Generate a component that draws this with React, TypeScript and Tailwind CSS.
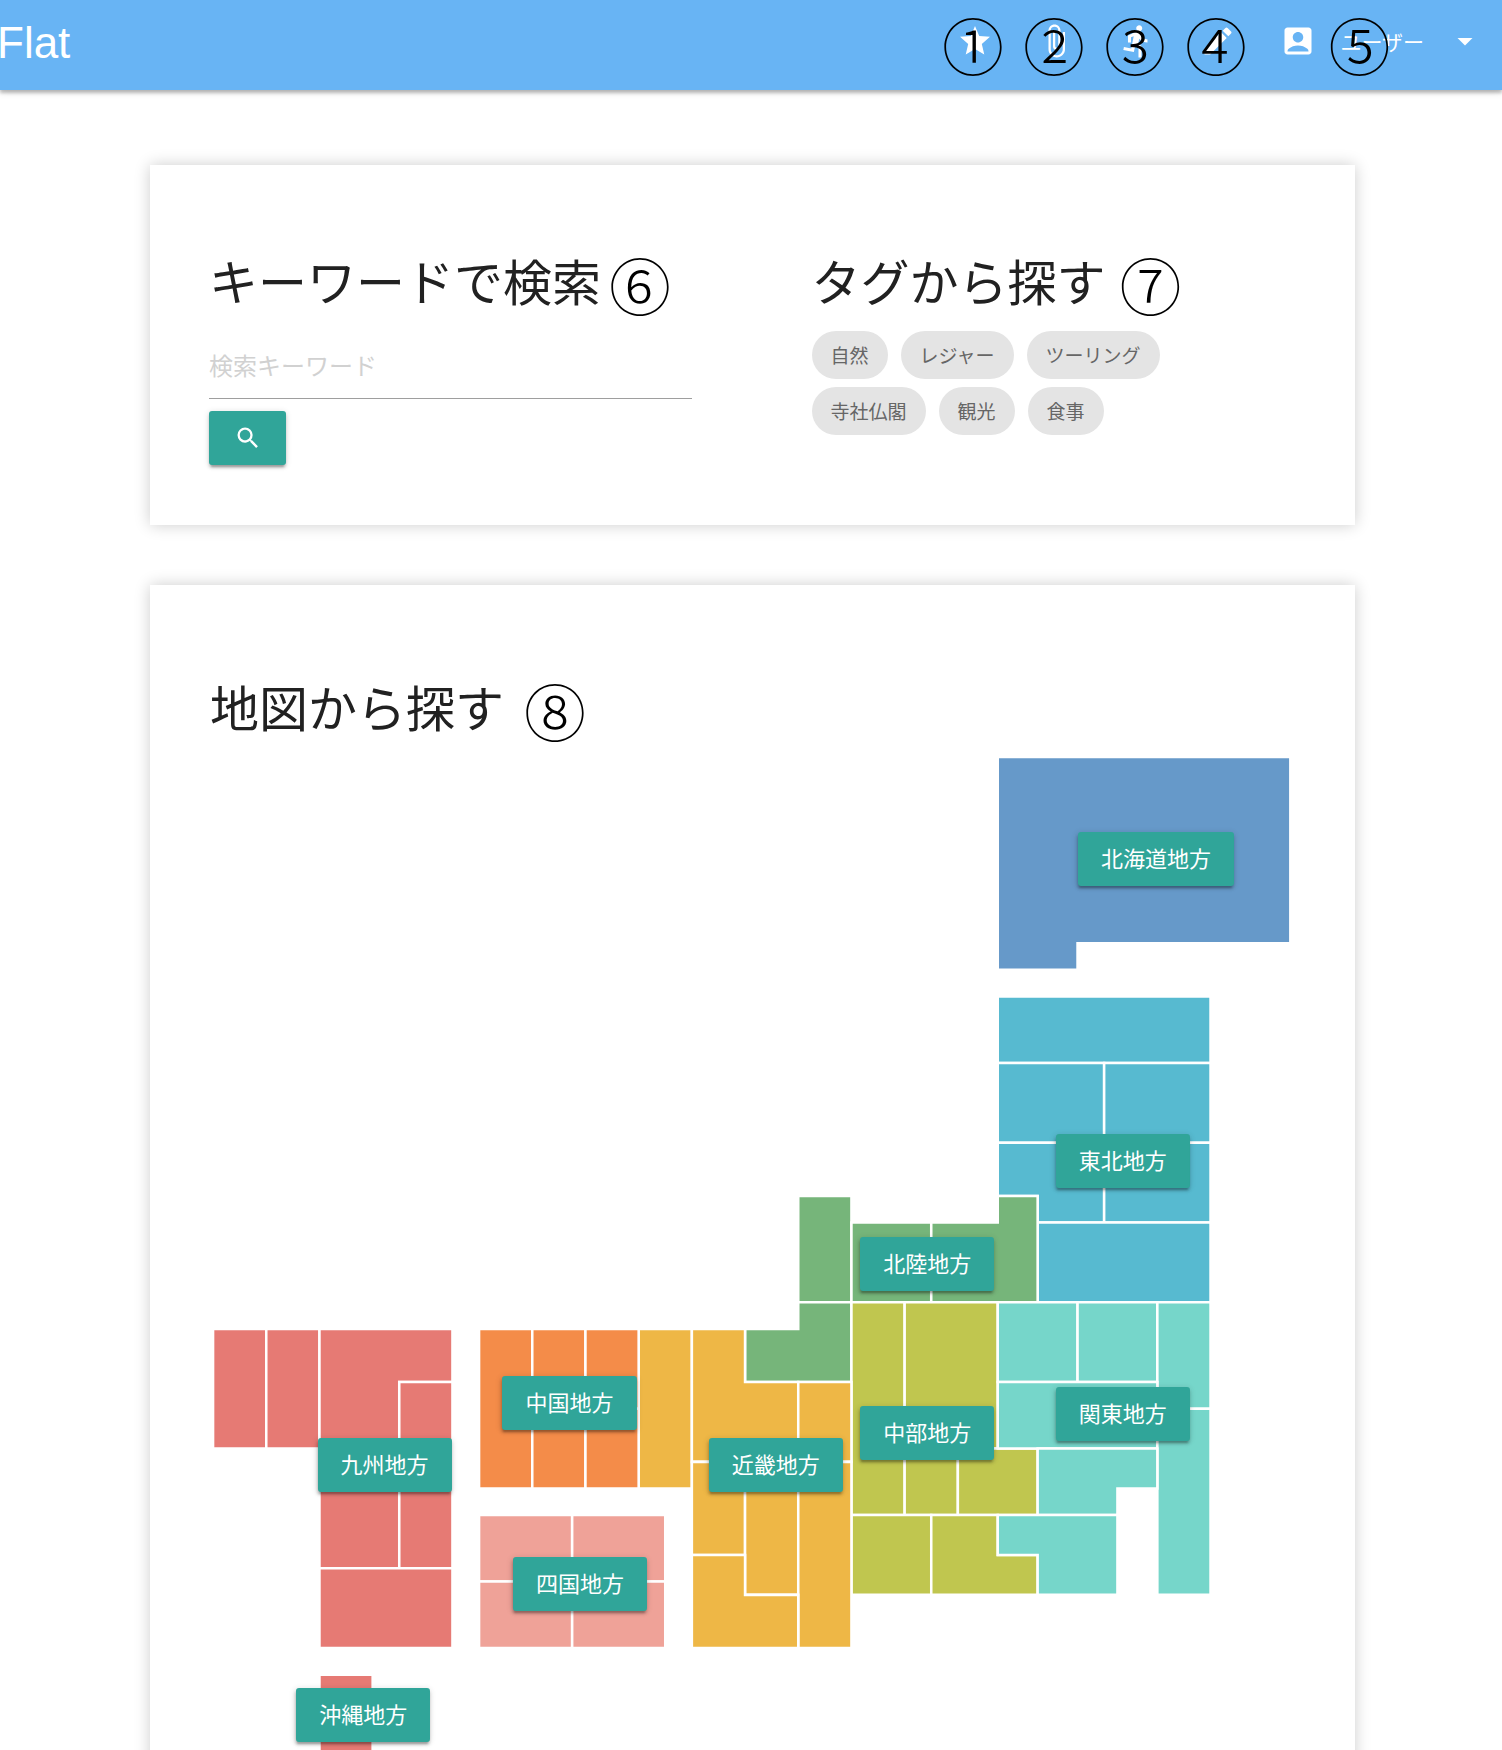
import { MdAccountBox, MdArrowDropDown, MdAttachFile, MdDirectionsRun, MdEdit, MdSearch, MdStar } from "react-icons/md";
import type { ReactNode } from "react";

const tags = ["自然", "レジャー", "ツーリング", "寺社仏閣", "観光", "食事"];

/* The map is drawn on a grid of square units; every polygon is one prefecture. */
const GRID_LEFT = -0.23;
const GRID_WIDTH = 81.58;
const GRID_HEIGHT = 76;

type Region = { name: string; color: string; x: number; y: number; shapes: string[] };

const regions: Region[] = [
  {
    name: "北海道地方", color: "#6699c9", x: 70.9, y: 7.7,
    shapes: ["59,0 81,0 81,14 65,14 65,16 59,16"],
  },
  {
    name: "東北地方", color: "#57bad0", x: 68.4, y: 30.4,
    shapes: [
      "59,18 75,18 75,23 59,23",
      "59,23 67,23 67,29 59,29",
      "67,23 75,23 75,29 67,29",
      "59,29 67,29 67,35 62,35 62,33 59,33",
      "67,29 75,29 75,35 67,35",
      "62,35 75,35 75,41 62,41",
    ],
  },
  {
    name: "北陸地方", color: "#76b57a", x: 53.7, y: 38.1,
    shapes: [
      "44,33 48,33 48,41 44,41",
      "48,35 54,35 54,41 48,41",
      "54,35 59,35 59,33 62,33 62,41 54,41",
      "44,41 48,41 48,47 40,47 40,43 44,43",
    ],
  },
  {
    name: "中部地方", color: "#c0c64f", x: 53.7, y: 50.8,
    shapes: [
      "48,41 52,41 52,57 48,57",
      "52,41 59,41 59,52 52,52",
      "52,52 56,52 56,57 52,57",
      "56,52 62,52 62,57 56,57",
      "48,57 54,57 54,63 48,63",
      "54,57 59,57 59,60 62,60 62,63 54,63",
    ],
  },
  {
    name: "関東地方", color: "#76d6ca", x: 68.4, y: 49.4,
    shapes: [
      "59,41 65,41 65,47 59,47",
      "65,41 71,41 71,47 65,47",
      "71,41 75,41 75,49 71,49",
      "59,47 71,47 71,52 59,52",
      "71,49 75,49 75,63 71,63",
      "62,52 71,52 71,55 68,55 68,57 62,57",
      "59,57 68,57 68,63 62,63 62,60 59,60",
    ],
  },
  {
    name: "近畿地方", color: "#eeb746", x: 42.3, y: 53.2,
    shapes: [
      "32,43 36,43 36,55 32,55",
      "36,43 40,43 40,47 44,47 44,53 36,53",
      "44,47 48,47 48,53 44,53",
      "36,53 40,53 40,60 36,60",
      "40,53 44,53 44,63 40,63",
      "44,53 48,53 48,67 44,67",
      "36,60 40,60 40,63 44,63 44,67 36,67",
    ],
  },
  {
    name: "中国地方", color: "#f48c49", x: 26.8, y: 48.6,
    shapes: [
      "20,43 24,43 24,55 20,55",
      "24,43 28,43 28,49 24,49",
      "24,49 28,49 28,55 24,55",
      "28,43 32,43 32,49 28,49",
      "28,49 32,49 32,55 28,55",
    ],
  },
  {
    name: "四国地方", color: "#efa298", x: 27.6, y: 62.2,
    shapes: [
      "20,57 27,57 27,62 20,62",
      "27,57 34,57 34,62 27,62",
      "20,62 27,62 27,67 20,67",
      "27,62 34,62 34,67 27,67",
    ],
  },
  {
    name: "九州地方", color: "#e67a74", x: 12.9, y: 53.2,
    shapes: [
      "0,43 4,43 4,52 0,52",
      "4,43 8,43 8,52 4,52",
      "8,43 18,43 18,47 14,47 14,53 8,53",
      "14,47 18,47 18,53 14,53",
      "8,53 14,53 14,61 8,61",
      "14,53 18,53 18,61 14,61",
      "8,61 18,61 18,67 8,67",
    ],
  },
  {
    name: "沖縄地方", color: "#e67a74", x: 11.3, y: 72,
    shapes: ["8,69 12,69 12,75 8,75"],
  },
];

const raised = "shadow-[0_3px_3px_rgba(0,0,0,0.16),0_1px_6px_rgba(0,0,0,0.14),0_4px_2px_-2px_rgba(0,0,0,0.2)]";

function Marker({ children }: { children: ReactNode }) {
  return (
    <span className="block text-[62px] leading-[62px] font-light text-black">{children}</span>
  );
}

function NavItem({ label, mark, children }: { label: string; mark: string; children: ReactNode }) {
  return (
    <li className="relative flex w-[81px] justify-center">
      <a href="#" aria-label={label}>{children}</a>
      <span className="pointer-events-none absolute inset-0 flex items-center justify-center pt-1.5 pr-1">
        <Marker>{mark}</Marker>
      </span>
    </li>
  );
}

function Card({ children }: { children: ReactNode }) {
  return <section className="bg-white shadow-[0_0_15px_rgba(0,0,0,0.2)]">{children}</section>;
}

function Heading({ text, mark, gap }: { text: string; mark: string; gap: string }) {
  return (
    <div className={`mb-4 flex items-center ${gap}`}>
      <h2 className="text-[49px] leading-[54px] text-[#212121]">{text}</h2>
      <span className="pt-2"><Marker>{mark}</Marker></span>
    </div>
  );
}

export default function App() {
  return (
    <div className="min-h-screen bg-white font-['Noto_Sans_CJK_JP',sans-serif] text-[#212121]">
      <header className="flex h-[90px] items-center justify-between bg-[#68b4f4] text-white shadow-[0_3px_3px_rgba(0,0,0,0.2),0_1px_8px_rgba(0,0,0,0.2)]">
        <a href="#" className="-ml-[3px] pb-1 font-['Liberation_Sans',sans-serif] text-[44px] leading-[54px]">Flat</a>
        <nav className="pb-2">
          <ul className="flex items-center">
            <NavItem label="お気に入り" mark="①"><MdStar className="size-9" /></NavItem>
            <NavItem label="添付" mark="②"><MdAttachFile className="size-9" /></NavItem>
            <NavItem label="アクティビティ" mark="③"><MdDirectionsRun className="size-9" /></NavItem>
            <NavItem label="編集" mark="④"><MdEdit className="size-9" /></NavItem>
            <li className="relative ml-[22px] pr-[19px]">
              <button type="button" className="flex items-center text-[21px] leading-9">
                <MdAccountBox className="size-9" />
                <span className="ml-6">ユーザー</span>
                <MdArrowDropDown className="ml-[23px] size-9" />
              </button>
              <span className="pointer-events-none absolute inset-y-0 left-12 flex items-center pt-1.5">
                <Marker>⑤</Marker>
              </span>
            </li>
          </ul>
        </nav>
      </header>

      <main className="mr-[147px] ml-[150px] flex flex-col gap-[60px] py-[75px]">
        <Card>
          <div className="grid min-h-[360px] grid-cols-2">
            <form className="pt-20 pr-[61px] pb-[59px] pl-[59px]">
              <Heading text="キーワードで検索" mark="⑥" gap="gap-2" />
              <input
                type="text"
                aria-label="検索キーワード"
                placeholder="検索キーワード"
                className="block h-[68px] w-full border-b border-[#9e9e9e] bg-transparent text-2xl outline-none placeholder:text-[#d1d1d1]"
              />
              <button
                type="submit"
                aria-label="検索"
                className={`mt-3 flex h-[54px] w-[77px] items-center justify-center rounded-[3px] bg-[#30a599] text-white ${raised}`}
              >
                <MdSearch className="size-7" />
              </button>
            </form>
            <div className="pt-20 pr-[61px] pb-[59px] pl-[59px]">
              <Heading text="タグから探す" mark="⑦" gap="gap-3.5" />
              <ul className="flex max-w-[380px] flex-wrap gap-x-[13px] gap-y-2">
                {tags.map((tag) => (
                  <li key={tag}>
                    <a href="#" className="block rounded-full bg-[#e4e4e4] px-[19px] text-[19px] leading-[48px] text-[#666666]">{tag}</a>
                  </li>
                ))}
              </ul>
            </div>
          </div>
        </Card>

        <Card>
          <div className="px-[60px] pt-[86px] pb-[60px]">
            <Heading text="地図から探す" mark="⑧" gap="gap-5" />
            <div className="relative">
              <svg viewBox={`${GRID_LEFT} 0 ${GRID_WIDTH} ${GRID_HEIGHT}`} className="block w-full" aria-hidden="true">
                {regions.map((region) => (
                  <g key={region.name} fill={region.color} stroke="#ffffff" strokeWidth="0.19">
                    {region.shapes.map((points) => <polygon key={points} points={points} />)}
                  </g>
                ))}
              </svg>
              {regions.map((region) => (
                <a
                  key={region.name}
                  href="#"
                  style={{
                    left: `${((region.x - GRID_LEFT) / GRID_WIDTH) * 100}%`,
                    top: `${(region.y / GRID_HEIGHT) * 100}%`,
                  }}
                  className={`absolute -translate-1/2 rounded-[3px] bg-[#30a599] px-[23px] pb-1 text-[22px] leading-[50px] whitespace-nowrap text-white ${raised}`}
                >
                  {region.name}
                </a>
              ))}
            </div>
          </div>
        </Card>
      </main>
    </div>
  );
}
